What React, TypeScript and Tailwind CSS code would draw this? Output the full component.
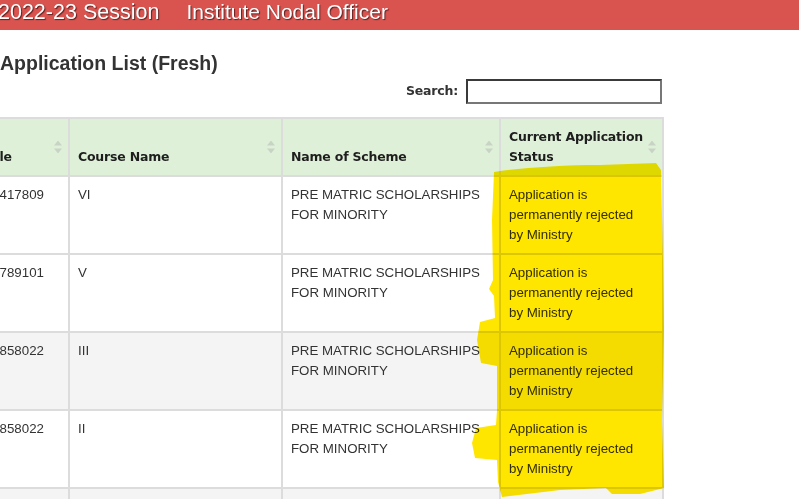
import React from "react";

const rows = [
  { mobile: "9876417809", course: "VI", bg: "bg-white" },
  { mobile: "9123789101", course: "V", bg: "bg-white" },
  { mobile: "9431858022", course: "III", bg: "bg-[#f4f4f4]" },
  { mobile: "9431858022", course: "II", bg: "bg-white" },
  { mobile: "9431858022", course: "I", bg: "bg-[#f4f4f4]" },
];

const headers = ["Mobile", "Course Name", "Name of Scheme", "Current Application Status"];

function SortIcon() {
  return (
    <svg
      width="8"
      height="13"
      viewBox="0 0 8 13"
      className="absolute right-[6px] top-1/2 -translate-y-1/2"
    >
      <path d="M4 0 L8 5 L0 5 Z" fill="#c8d3c6" />
      <path d="M4 13 L8 8 L0 8 Z" fill="#c8d3c6" />
    </svg>
  );
}

function Marker() {
  // freehand highlighter stroke over the status column
  return (
    <svg
      width="799"
      height="499"
      className="absolute left-0 top-0 pointer-events-none mix-blend-multiply"
    >
      <path
        d="M494 172 C520 168 560 165 600 165 L656 163 L661 170 L663 260 L664 330 L662 420 L664 488 L640 494 L612 494 L606 488 L560 490 L502 497 L498 482 L497 460 L475 458 L472 443 L476 428 L496 425 L497 410 L497 366 L481 363 L477 340 L480 322 L495 318 L494 296 L489 289 L493 280 L492 220 Z"
        fill="#ffe600"
      />
    </svg>
  );
}

function App() {
  return (
    <div className="relative w-[799px] h-[499px] overflow-hidden bg-white font-['Liberation_Sans',Arial,sans-serif]">
      <div className="h-[30px] bg-[#d9534f] flex items-start text-white leading-[24px] [text-shadow:1px_1px_1px_rgba(60,20,20,0.8)]">
        <span className="-ml-[2px] text-[21.5px]">2022-23 Session</span>
        <span className="ml-[27px] text-[21px]">Institute Nodal Officer</span>
      </div>

      <h2 className="mt-[23px] text-[19.5px] leading-[20px] font-bold text-[#333]">
        Application List (Fresh)
      </h2>

      <div className="-ml-10 w-[702px]">
        <div className="mt-[6px] flex justify-end items-center gap-[8px]">
          <span className="font-['DejaVu_Sans',Verdana,sans-serif] font-bold text-[12.5px] tracking-[-0.2px] text-[#333]">
            Search:
          </span>
          <input
            type="text"
            className="w-[196px] h-[25px] border-2 border-t-[#3a3a3a] border-l-[#3a3a3a] border-r-[#777] border-b-[#777] bg-white"
          />
        </div>

        <table className="mt-[13px] w-[702px] table-fixed border-collapse text-[13.3px] leading-[20px] text-[#333]">
          <colgroup>
            <col className="w-[108px]" />
            <col className="w-[213px]" />
            <col className="w-[218px]" />
            <col className="w-[163px]" />
          </colgroup>
          <thead>
            <tr className="bg-[#dff0d8] font-['DejaVu_Sans',Verdana,sans-serif] text-[12.5px] text-[#1e1e1e]">
              {headers.map((h, i) => (
                <th
                  key={h}
                  className={`relative border-2 border-[#dcdcdc] ${i === 0 ? "pl-[4px]" : "pl-[8px]"} pr-[8px] py-[8px] align-bottom text-left font-bold tracking-[-0.2px]`}
                >
                  <div className="pr-[8px]">{h}</div>
                  <SortIcon />
                </th>
              ))}
            </tr>
          </thead>
          <tbody>
            {rows.map((r, i) => (
              <tr key={i} className={r.bg}>
                <td className="border-2 border-[#dcdcdc] px-[8px] py-[8px] align-top whitespace-nowrap">
                  {r.mobile}
                </td>
                <td className="border-2 border-[#dcdcdc] px-[8px] py-[8px] align-top">
                  {r.course}
                </td>
                <td className="border-2 border-[#dcdcdc] px-[8px] py-[8px] align-top whitespace-nowrap">
                  PRE MATRIC SCHOLARSHIPS
                  <br />
                  FOR MINORITY
                </td>
                <td className="border-2 border-[#dcdcdc] pl-[8px] pr-[12px] py-[8px] align-top whitespace-nowrap">
                  Application is
                  <br />
                  permanently rejected
                  <br />
                  by Ministry
                </td>
              </tr>
            ))}
          </tbody>
        </table>
      </div>

      <Marker />
    </div>
  );
}

export default App;
